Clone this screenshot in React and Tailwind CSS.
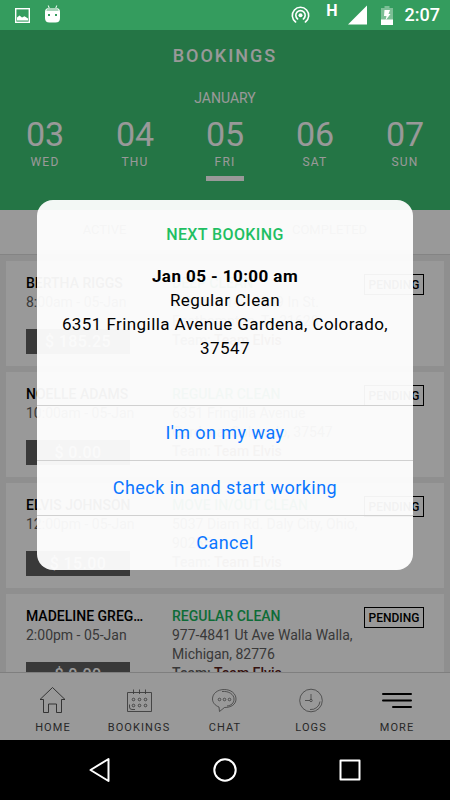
import React from "react";

const days = [
  { num: "03", day: "WED" },
  { num: "04", day: "THU" },
  { num: "05", day: "FRI", active: true },
  { num: "06", day: "SAT" },
  { num: "07", day: "SUN" },
];

const bookings = [
  { name: "BERTHA RIGGS", time: "8:00am - 05-Jan", price: "$ 185.25", type: "DEEP CLEAN", address: "P.O. Box 147 2289 In St. Easthampton, Tx 31628" },
  { name: "NOELLE ADAMS", time: "10:00am - 05-Jan", price: "$ 0.00", type: "REGULAR CLEAN", address: "6351 Fringilla Avenue Gardena, Colorado, 37547" },
  { name: "ELVIS JOHNSON", time: "12:00pm - 05-Jan", price: "$ 15.00", type: "MOVE IN/OUT CLEAN", address: "5037 Diam Rd. Daly City, Ohio, 90255" },
  { name: "MADELINE GREGORY", time: "2:00pm - 05-Jan", price: "$ 0.00", type: "REGULAR CLEAN", address: "977-4841 Ut Ave Walla Walla, Michigan, 82776" },
];

function StatusBar() {
  return (
    <div className="flex h-[30px] shrink-0 items-center justify-between bg-[#349c5e] pl-[15px] pr-[10px] text-white">
      <div className="flex items-center gap-[15px]">
        <svg width="15" height="15" viewBox="0 0 15 15" fill="none" aria-hidden="true">
          <rect x="0.7" y="0.7" width="13.6" height="13.6" stroke="#fff" strokeWidth="1.4" />
          <path d="M2 12.5V9.5L4.5 7.5L7 9.5L9.5 8.3L13 10.5V12.5Z" fill="#fff" />
        </svg>
        <svg width="15" height="18" viewBox="0 0 15 18" className="mb-[3px]" aria-hidden="true">
          <path d="M3.3 0.5L4.5 4M11.7 0.5L10.5 4" stroke="#fff" strokeWidth="1" />
          <path d="M0 7Q0 3 4 3H11Q15 3 15 7V13Q15 17.500 10.500 17.500H4.500Q0 17.500 0 13Z" fill="#fff" />
          <path d="M1.500 5.300Q2 3 4 3H11Q13 3 13.500 5.300V6H1.500Z" fill="#a9d5ba" />
          <rect x="3" y="9" width="2" height="2" fill="#349c5e" />
          <rect x="10" y="9" width="2" height="2" fill="#349c5e" />
        </svg>
      </div>
      <div className="flex items-center">
        <svg width="19" height="18" viewBox="0 0 19 18" fill="none" stroke="#fff" strokeWidth="1.6" strokeLinecap="round" aria-hidden="true">
          <circle cx="9.500" cy="9.300" r="2" fill="#fff" stroke="none" />
          <path d="M6.600 13A4.700 4.700 0 1 1 12.400 13" />
          <path d="M4.600 16A8.200 8.200 0 1 1 14.400 16" />
        </svg>
        <span className="mb-2 ml-4 text-base leading-4 font-bold">H</span>
        <svg width="19" height="20" viewBox="0 0 19 20" className="ml-[10px]" aria-hidden="true">
          <path d="M19 0.500V19.500H0Z" fill="#fff" />
        </svg>
        <svg width="12" height="19" viewBox="0 0 12 19" className="ml-[14px]" aria-hidden="true">
          <path d="M3.500 0H8.500V2H12V19H0V2H3.500Z" fill="#7dbf96" />
          <path d="M0 13.500H12V19H0Z" fill="#fff" />
          <path d="M3.500 4H9L7.500 8H9.500L4.500 14.500L5.500 10H3Z" fill="#fff" />
        </svg>
        <span className="ml-3 text-lg leading-5 font-medium">2:07</span>
      </div>
    </div>
  );
}

function BookingCard({ booking }) {
  return (
    <li className="flex h-[105px] bg-white px-5 pt-[13px] text-sm leading-[19px] text-[#606060]">
      <div className="w-[146px] shrink-0">
        <h3 className="w-[120px] truncate font-medium text-black">{booking.name}</h3>
        <p>{booking.time}</p>
        <div className="mt-[17px] h-[25px] w-[104px] bg-[#606060] text-center text-base leading-[25px] font-medium tracking-wide text-white">
          {booking.price}
        </div>
      </div>
      <div className="w-[188px]">
        <h4 className="truncate font-medium text-[#18b45c]">{booking.type}</h4>
        <p>{booking.address}</p>
        <p className="font-medium">
          Team: <span className="text-[#582018]">Team Elvis</span>
        </p>
      </div>
      <span className="ml-auto flex h-[21px] w-[60px] shrink-0 items-center justify-center self-start border border-black text-xs font-medium text-black">
        PENDING
      </span>
    </li>
  );
}

function HomeIcon() {
  return (
    <svg width="30" height="30" viewBox="0 0 30 30" fill="none" stroke="#444" strokeWidth="0.9" aria-hidden="true">
      <path d="M14.500 2.500L2 14.500H5.500V27.500H10.500V19H18.500V27.500H23.500V14.500H27Z" />
    </svg>
  );
}

function CalendarIcon() {
  return (
    <svg width="30" height="30" viewBox="0 0 30 30" fill="none" stroke="#666" strokeWidth="0.9" aria-hidden="true">
      <path d="M3.500 7.500H27.500V26.500H3.500ZM5.500 19.500V22Q5.500 24.500 8 24.500H11M9.500 4.500V9M15.500 4.500V9M21.500 4.500V9" />
      {[9.5, 15.5, 21.5].map((x) => (
        <g key={x}>
          <circle cx={x} cy="14.500" r="1.300" />
          <circle cx={x} cy="20.500" r="1.300" />
        </g>
      ))}
    </svg>
  );
}

function ChatIcon() {
  return (
    <svg width="30" height="30" viewBox="0 0 30 30" fill="none" stroke="#555" strokeWidth="0.7" aria-hidden="true">
      <path d="M9 22C5 20.500 2.500 17.500 2.500 14C2.500 8.500 7.500 4.500 14.200 4.500S26 8.500 26 14S21 22.500 14.500 22.500L9.500 26.500Z" />
      <path d="M12 6.500C19 5.800 24 9.500 24 14S21 20.500 17 21" />
      <circle cx="9.500" cy="14.500" r="1.300" />
      <circle cx="14.500" cy="14.500" r="1.300" />
      <circle cx="19.500" cy="14.500" r="1.300" />
    </svg>
  );
}

function ClockIcon() {
  return (
    <svg width="30" height="30" viewBox="0 0 30 30" fill="none" stroke="#555" strokeWidth="0.7" aria-hidden="true">
      <circle cx="15" cy="15.500" r="11.300" />
      <circle cx="15" cy="15.500" r="1.200" />
      <path d="M15 9V14.300M13.800 15.500H9M24 16.500A9 9 0 0 1 14 24.500" />
    </svg>
  );
}

function MoreIcon() {
  return (
    <svg width="30" height="30" viewBox="0 0 30 30" stroke="#000" strokeWidth="2" strokeLinecap="round" aria-hidden="true">
      <path d="M1 9H29M1 15.500H29M11 22H29" />
    </svg>
  );
}

const tabs = [
  { label: "HOME", Icon: HomeIcon },
  { label: "BOOKINGS", Icon: CalendarIcon },
  { label: "CHAT", Icon: ChatIcon },
  { label: "LOGS", Icon: ClockIcon },
  { label: "MORE", Icon: MoreIcon },
];

export default function App() {
  return (
    <div className="flex h-screen flex-col overflow-hidden font-['Roboto','Liberation_Sans',sans-serif]">
      <StatusBar />
      <div className="relative flex min-h-0 flex-1 flex-col">
        <header className="h-[180px] shrink-0 bg-[#3cc373] pt-4 text-center text-white">
          <h1 className="text-lg leading-5 font-medium tracking-[2px]">BOOKINGS</h1>
          <p className="mt-[22px] text-sm leading-5">JANUARY</p>
          <div className="mt-2 grid grid-cols-5">
            {days.map((d) => (
              <button key={d.num} type="button" className="flex flex-col items-center">
                <span className="text-[34px] leading-9">{d.num}</span>
                <span className="mt-[2px] text-xs leading-4 tracking-widest">{d.day}</span>
                {d.active && <span className="mt-[6px] h-[5px] w-[38px] bg-white" />}
              </button>
            ))}
          </div>
        </header>
        <div className="grid h-[45px] shrink-0 grid-cols-2 border-b border-[#ddd] bg-white text-[13px] text-[#666]">
          <button type="button" className="pr-4 pb-1">ACTIVE</button>
          <button type="button" className="pr-4 pb-1">COMPLETED</button>
        </div>
        <main className="min-h-0 flex-1 overflow-hidden bg-[#eee] px-[6px] pt-[6px]">
          <ul className="flex flex-col gap-[6px]">
            {bookings.map((b) => (
              <BookingCard key={b.name} booking={b} />
            ))}
          </ul>
        </main>
        <nav className="grid h-[68px] shrink-0 grid-cols-5 border-t border-[#d4d4d4] bg-white px-[10px] pt-3">
          {tabs.map(({ label, Icon }) => (
            <button key={label} type="button" className="flex flex-col items-center gap-[5px] text-[11px] leading-4 tracking-widest text-[#444]">
              <Icon />
              {label}
            </button>
          ))}
        </nav>
        <div className="absolute inset-0 flex items-center justify-center bg-black/40 px-[37px]">
          <div role="dialog" aria-modal="true" aria-labelledby="dialog-title" className="w-full overflow-hidden rounded-2xl bg-white/95 text-center text-black">
            <div className="min-h-[205px] px-4 pt-[23px]">
              <h2 id="dialog-title" className="text-base leading-6 font-medium tracking-wide text-[#1fbf63]">NEXT BOOKING</h2>
              <div className="mt-[17px] text-[17px] leading-6 tracking-wide">
                <p className="font-bold">Jan 05 - 10:00 am</p>
                <p>Regular Clean</p>
                <p>6351 Fringilla Avenue Gardena, Colorado, 37547</p>
              </div>
            </div>
            {["I'm on my way", "Check in and start working", "Cancel"].map((label) => (
              <button key={label} type="button" className="block h-[55px] w-full border-t border-[#d0d0d0] text-lg tracking-wide text-[#0a76ff]">
                {label}
              </button>
            ))}
          </div>
        </div>
      </div>
      <div className="flex h-[60px] shrink-0 items-center justify-center gap-[101px] bg-black">
        <button type="button" aria-label="Back">
          <svg width="24" height="26" viewBox="0 0 24 26" fill="none" stroke="#fff" strokeWidth="2" strokeLinejoin="round">
            <path d="M20.500 2V24L2.500 13Z" />
          </svg>
        </button>
        <button type="button" aria-label="Home">
          <svg width="24" height="26" viewBox="0 0 24 26" fill="none" stroke="#fff" strokeWidth="2">
            <circle cx="12" cy="13" r="10.700" />
          </svg>
        </button>
        <button type="button" aria-label="Recent apps">
          <svg width="24" height="26" viewBox="0 0 24 26" fill="none" stroke="#fff" strokeWidth="2" strokeLinejoin="round">
            <rect x="2.500" y="3.500" width="19" height="19" />
          </svg>
        </button>
      </div>
    </div>
  );
}
